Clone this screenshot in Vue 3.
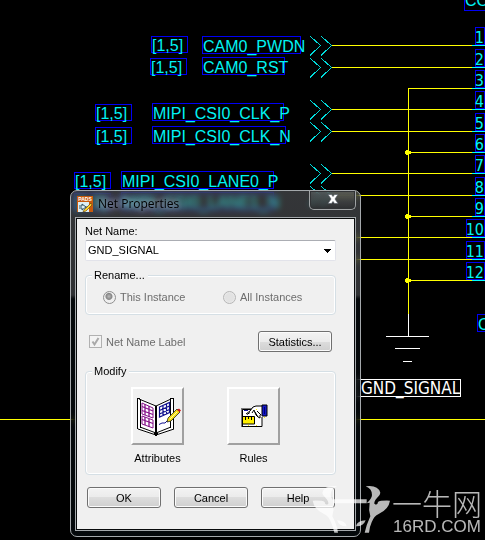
<script setup>
import { ref } from 'vue'

const nets = [
  { page: [151, 36], name: [202, 36], w: 98, label: 'CAM0_PWDN' },
  { page: [150, 58], name: [202, 57], w: 82, label: 'CAM0_RST' },
  { page: [95, 104], name: [152, 103], w: 131, label: 'MIPI_CSI0_CLK_P' },
  { page: [95, 127], name: [152, 126], w: 133, label: 'MIPI_CSI0_CLK_N' },
  { page: [74, 172], name: [121, 171], w: 152, label: 'MIPI_CSI0_LANE0_P' },
  { page: [74, 193], name: [121, 192], w: 152, label: 'MIPI_CSI0_LANE1_N' }
]
const ports = [45, 67, 109, 131, 173, 195]
const pinRows = [45, 67, 88, 109, 131, 152, 173, 195, 216, 237, 259, 280]
const pins = pinRows.map((y, i) => ({
  n: i + 1,
  y,
  start: [2, 5, 8, 11].includes(i) ? 408 : [9, 10].includes(i) ? 340 : 332,
  left: i > 8 ? 466 : 475
}))

const netName = ref('GND_SIGNAL')
const scope = ref('this')
const labelShown = ref(true)
</script>

<template>
  <main class="desktop">
    <svg class="schematic" width="485" height="540" viewBox="0 0 485 540" role="img" aria-label="Schematic">
      <g class="net" v-for="n in nets" :key="n.label">
        <rect class="box" :x="n.page[0] + 0.5" :y="n.page[1] + 0.5" width="36" height="16" />
        <rect class="box" :x="n.name[0] + 0.5" :y="n.name[1] + 0.5" :width="n.w" height="17" />
        <text :x="n.page[0] + 1" :y="n.page[1] + 15">[1,5]</text>
        <text :x="n.name[0] + 1" :y="n.name[1] + 16">{{ n.label }}</text>
      </g>
      <g class="port" v-for="y in ports" :key="y">
        <path :d="`M310 ${y - 9}l10.500 9.500l-10.500 10M321 ${y - 9}l10.500 9.500l-10.500 10`" />
      </g>
      <g v-for="p in pins" :key="p.n">
        <path class="wire" :d="`M${p.start} ${p.y + 0.5}H472`" />
        <path class="stub" :d="`M472 ${p.y + 0.5}H485`" />
        <rect class="box" :x="p.left + 0.5" :y="p.y - 17.5" :width="484 - p.left" height="17" />
        <text class="pin" x="484" :y="p.y - 2" text-anchor="end">{{ p.n }}</text>
      </g>
      <path class="wire" d="M408.500 88V314M0 419.500H485" />
      <path class="dot" d="M406 150h3v1h2v3h-2v1h-3v-1h-1v-3h1zM406 214h3v1h2v3h-2v1h-3v-1h-1v-3h1zM406 278h3v1h2v3h-2v1h-3v-1h-1v-3h1z" />
      <path class="ground" d="M408.500 314V336M386 336.500H429M395 348.500H420M403 361.500H412" />
      <rect class="selected" x="355.500" y="379.500" width="105" height="17" />
      <text class="gnd" x="361" y="394">GND_SIGNAL</text>
      <rect class="box" x="464.500" y="-8.500" width="30" height="19" />
      <text class="part" x="465" y="6">CO</text>
      <rect class="box" x="477.500" y="314.500" width="20" height="17" />
      <text class="part" x="478" y="330">C</text>
    </svg>

    <section class="dialog" role="dialog" aria-label="Net Properties">
      <header class="titlebar">
        <svg class="app-icon" width="16" height="16" viewBox="0 0 16 16" aria-hidden="true">
          <rect width="16" height="16" fill="#c8590c" />
          <rect x="1" y="6" width="11" height="10" fill="#dceef4" />
          <text x="8" y="5" text-anchor="middle" class="icon-text">PADS</text>
          <path d="M2 10h3v-2l4 3l-4 3v-2H2M9 11h3" stroke="#31515e" fill="none" />
          <path d="M14 7l-7 7l-1 2l3-1l6-6z" fill="#ffd428" stroke="#5b3200" stroke-width=".6" />
        </svg>
        <h1>Net Properties</h1>
        <button class="close" type="button" aria-label="Close">
          <svg width="12" height="10" viewBox="0 0 12 10"><path d="M1 .500h3.500l1.500 2l1.500-2H11L8 5l3 4.500H7.500l-1.500-2l-1.500 2H1L4 5z" fill="#fff" stroke="#555b66" stroke-width=".7" /></svg>
        </button>
      </header>

      <form class="client" @submit.prevent>
        <label class="caption" for="net-name">Net Name:</label>
        <div class="combo">
          <select id="net-name" v-model="netName">
            <option>GND_SIGNAL</option>
          </select>
          <svg class="arrow" width="7" height="4" viewBox="0 0 7 4" aria-hidden="true"><path d="M0 0h7v1h-1v1h-1v1h-1v1h-1v-1h-1v-1h-1v-1h-1z" /></svg>
        </div>

        <fieldset class="group rename">
          <legend>Rename...</legend>
          <div class="choices">
            <label><input v-model="scope" type="radio" name="scope" value="this" disabled />This Instance</label>
            <label><input v-model="scope" type="radio" name="scope" value="all" disabled />All Instances</label>
          </div>
        </fieldset>

        <div class="label-row">
          <label>
            <span class="tick">
              <input v-model="labelShown" type="checkbox" disabled />
              <svg width="13" height="13" viewBox="0 0 13 13" aria-hidden="true"><path d="M3.500 6.500l2 3l4-6.500" fill="none" stroke="#a9a9a9" stroke-width="2" /></svg>
            </span>
            Net Name Label
          </label>
          <button class="push" type="button">Statistics...</button>
        </div>

        <fieldset class="group modify">
          <legend>Modify</legend>
          <div class="tools">
            <div class="tool">
              <button id="attributes" class="tile" type="button" aria-labelledby="attributes-label">
                <svg width="46" height="40" viewBox="15 20 46 40" aria-hidden="true">
                  <path d="M17 22h3l16 7l15-7h3v31l-18 6l-19-6z" fill="#fff" />
                  <path d="M17.500 22v31M20.500 23v29M50.500 23v29M53.500 22v31M17 22.500h3M50 22.500h4M19 23l17 7l15-7M18 53l18 6l18-6M20 51l16 6l15-6" fill="none" stroke="#000" />
                  <path d="M36 30v29" stroke="#000" stroke-width="2" />
                  <path d="M22 27l11 5v10l-11-4zM22 40l11 4v8l-11-4z" fill="#fff" stroke="#86138b" />
                  <path d="M22 30.500l11 4.500M22 34.500l11 4M22 43.500l11 4M25 28v11M29 30v11M25 41v8M29 43v8" fill="none" stroke="#86138b" stroke-width="1.300" />
                  <path d="M39.500 31l10-4.500v10l-10 4.500zM39.500 34.500l10-4.500M39.500 38l10-4.500M43 29.500v10M46.500 28v10" fill="none" stroke="#11118e" stroke-width="1.200" />
                  <path d="M39 48.500l3-1.500h3l3-3" fill="none" stroke="#11118e" />
                  <path d="M48 42l9-9l3 3l-9 9l-4 1z" fill="#f2dd16" stroke="#222" stroke-width=".8" />
                  <path d="M50 43l7-7" stroke="#fff7a0" />
                  <path d="M57 34l2-1.500l2 2l-1.500 1.500z" fill="#d11818" />
                  <path d="M34 57h4v2h-1v2h-2v-2h-1z" />
                </svg>
              </button>
              <label id="attributes-label" for="attributes">Attributes</label>
            </div>
            <div class="tool">
              <button id="rules" class="tile" type="button" aria-labelledby="rules-label">
                <svg width="28" height="24" viewBox="19 27 28 24" aria-hidden="true">
                  <path d="M21 31h20v19H21z" fill="#fff" />
                  <path d="M20 31h13v1.500H21.500V50H20z" fill="#777" />
                  <path d="M21.500 50V32.500H30M21 49.500h20V40" fill="none" stroke="#000" />
                  <path d="M23 33h4v1h-4z" fill="#1515a0" />
                  <path d="M22 39h11v8H22z" fill="#ffef00" />
                  <path d="M22 39.500h11.500v7.500H22M24.500 40v3M27.500 40v2M30.500 40v3" fill="none" stroke="#000" />
                  <path d="M25 37l4-3l3-4h4l5-1v9l-2 3l-2-1l-2-2l-1-4l-3 1l-3 2z" fill="#fff" />
                  <path d="M25 37l4-3l3-4l3-1h6M26 37.500l3-2M31 36l2-3l2 5l2 2M34 35l3 5l2 1v-3M36 34l4 4" fill="none" stroke="#000" />
                  <path d="M41 28h5v11h-5z" fill="#1418c8" stroke="#000" />
                  <path d="M43.500 30v7" stroke="#000070" />
                  <path d="M27 48h1v1h-1zM35 48h1v1h-1zM43 40h1v1h-1zM35 32h1v1h-1z" fill="#ffef00" />
                </svg>
              </button>
              <label id="rules-label" for="rules">Rules</label>
            </div>
          </div>
        </fieldset>

        <footer class="actions">
          <button class="push" type="submit">OK</button>
          <button class="push" type="button">Cancel</button>
          <button class="push" type="button">Help</button>
        </footer>
      </form>
    </section>

    <svg class="watermark" width="235" height="70" viewBox="0 0 235 70" role="img" aria-label="16RD.COM">
      <g transform="scale(.333333)" fill="#fff">
        <path d="M250 88H350V100H250z" />
        <path d="M350 100Q366 85 366 75Q366 56 347 49Q384 44 391 68Q391 76 381 84Q372 94 373 101Q382 108 384 96Q390 91 420 92Q416 118 386 132Q372 138 365 157Q358 173 357 188H344Q349 165 361 139Q355 118 359 98z" />
        <path d="M318 169Q321 152 347 151Q340 170 318 169z" />
        <path d="M258 100Q242 85 242 75Q242 56 261 49Q224 44 217 68Q217 76 227 84Q236 94 235 101Q226 108 224 96Q218 91 188 92Q192 118 222 132Q236 138 243 157Q250 173 253 188H264Q261 165 247 139Q253 118 249 98z" />
        <path d="M290 169Q287 152 261 151Q268 170 290 169z" />
      </g>
      <text class="cn" x="142" y="45">一牛网</text>
      <text class="en" x="143" y="62">16RD.COM</text>
    </svg>
  </main>
</template>

<style>
body {
  margin: 0;
  background: #000;
}
</style>

<style scoped>
.desktop {
  position: relative;
  min-height: 540px;
  overflow: hidden;
  background: #000;
  font-family: "Liberation Sans", Arial, sans-serif;
  font-size: 11px;
  line-height: 14px;
}
.schematic {
  display: block;
  font-size: 16px;
}
.schematic text { fill: #00f4f4; }
.schematic path,
.schematic rect { fill: none; shape-rendering: crispEdges; }
.schematic .box { stroke: #0000f5; }
.schematic .port path { stroke: #00d8d8; }
.schematic .stub { stroke: #00ffff; }
.schematic .wire { stroke: #ffff00; }
.schematic .dot { fill: #ffff00; }
.schematic .ground,
.schematic .selected { stroke: #fff; }
.schematic .pin { font-family: "DejaVu Sans Condensed", "DejaVu Sans", sans-serif; }
.schematic .gnd { font-family: "DejaVu Sans Condensed", "DejaVu Sans", sans-serif; font-size: 17px; fill: #fff; }

.dialog {
  position: absolute;
  left: 70px;
  top: 190px;
  box-sizing: border-box;
  width: 291px;
  padding: 0 4px 5px;
  border: 1px solid #a4a8ab;
  border-radius: 7px;
  background: linear-gradient(rgba(124, 128, 134, .42), rgba(112, 116, 122, .42) 104px, rgba(8, 14, 18, .6) 108px);
  backdrop-filter: blur(3px);
}
.titlebar {
  display: flex;
  align-items: center;
  gap: 5px;
  height: 26px;
  padding-left: 2px;
}
.icon-text {
  font-size: 5px;
  font-weight: bold;
  fill: #fff;
}
h1 {
  flex: 1;
  margin: 0;
  font: 12px/16px "Open Sans", "Noto Sans", sans-serif;
  color: #000;
  text-shadow: 0 0 5px rgba(160, 175, 200, .8), 0 0 8px rgba(160, 175, 205, .8), 0 0 12px rgba(160, 175, 205, .8);
}
.close {
  align-self: flex-start;
  display: grid;
  place-items: center;
  width: 47px;
  height: 19px;
  padding: 0 0 2px;
  border: 1px solid #a0a3a5;
  border-top: 0;
  border-radius: 0 0 5px 5px;
  background: linear-gradient(rgba(110, 112, 112, .5), rgba(42, 44, 46, .6));
  box-shadow: inset 0 0 0 1px #303235;
}
.client {
  padding: 5px 18px 21px 8px;
  border: 1px solid #080a0b;
  outline: 1px solid #a4a8ab;
  margin: 1px;
  background: #f0f0f0;
}
.caption { display: block; }
.combo {
  position: relative;
  margin-top: 2px;
}
.combo select {
  display: block;
  appearance: none;
  width: 100%;
  height: 21px;
  padding: 0 20px 2px 2px;
  border: 1px solid #e2e3ea;
  border-top-color: #abadb3;
  border-radius: 2px;
  background: #fff;
  font: inherit;
  color: #000;
}
.arrow {
  position: absolute;
  right: 5px;
  top: 9px;
  pointer-events: none;
}
.group {
  box-sizing: border-box;
  margin: 0;
  padding: 0 4px;
  border: 1px solid #d5dfe5;
  border-radius: 4px;
  box-shadow: inset 0 0 0 1px #fff;
}
.group legend {
  margin-left: 2px;
  padding: 0 3px 0 2px;
  background: #f0f0f0;
}
.rename {
  height: 47px;
  margin-top: 7px;
}
.choices {
  display: grid;
  grid-template-columns: 120px 1fr;
  padding: 8px 0 0 13px;
  color: #6d6d6d;
}
.choices label,
.label-row label {
  display: flex;
  align-items: center;
  gap: 4px;
}
.choices input {
  appearance: none;
  box-sizing: border-box;
  width: 13px;
  height: 13px;
  margin: 0;
  border: 1px solid #b5b5b5;
  border-radius: 50%;
  background: radial-gradient(#e2e2e2 50%, #f6f6f6);
}
.choices input:checked {
  border-color: #8e8e8e;
  background: radial-gradient(circle at 45% 40%, #bbb 0, #858585 3px, #eee 4px, #f4f4f4);
}
.label-row {
  display: flex;
  justify-content: space-between;
  align-items: center;
  margin-top: 16px;
  padding: 0 4px;
  color: #6d6d6d;
}
.tick {
  display: grid;
}
.tick > * { grid-area: 1 / 1; }
.tick input {
  appearance: none;
  box-sizing: border-box;
  width: 13px;
  height: 13px;
  margin: 0;
  border: 1px solid #b1b1b1;
  background: #f3f3f3;
}
.push {
  box-sizing: border-box;
  width: 74px;
  height: 21px;
  padding: 0;
  border: 1px solid #707070;
  border-radius: 3px;
  background: linear-gradient(#f3f3f3, #ebebeb 50%, #dddddd 50%, #cfcfcf);
  box-shadow: inset 0 0 0 1px #fbfbfb;
  font: inherit;
  color: #000;
}
.modify {
  height: 111px;
  margin-top: 12px;
}
.tools {
  display: flex;
  gap: 43px;
  padding: 9px 0 0 41px;
}
.tool {
  display: flex;
  flex-direction: column;
  align-items: center;
  gap: 6px;
  width: 53px;
}
.tile {
  display: grid;
  place-items: center;
  box-sizing: border-box;
  width: 53px;
  height: 58px;
  padding: 0;
  border: 2px solid #a0a0a0;
  border-top-color: #fff;
  border-left-color: #fff;
  background: #f0f0f0;
}
.actions {
  display: flex;
  justify-content: space-between;
  margin-top: 12px;
  padding: 0 1px 0 2px;
}
.watermark {
  position: absolute;
  left: 250px;
  top: 470px;
  opacity: .72;
  pointer-events: none;
}
.watermark text { fill: #fff; }
.cn {
  font-family: "Noto Sans CJK SC", sans-serif;
  font-size: 30px;
  font-weight: 300;
}
.en { font-size: 17px; }
</style>
